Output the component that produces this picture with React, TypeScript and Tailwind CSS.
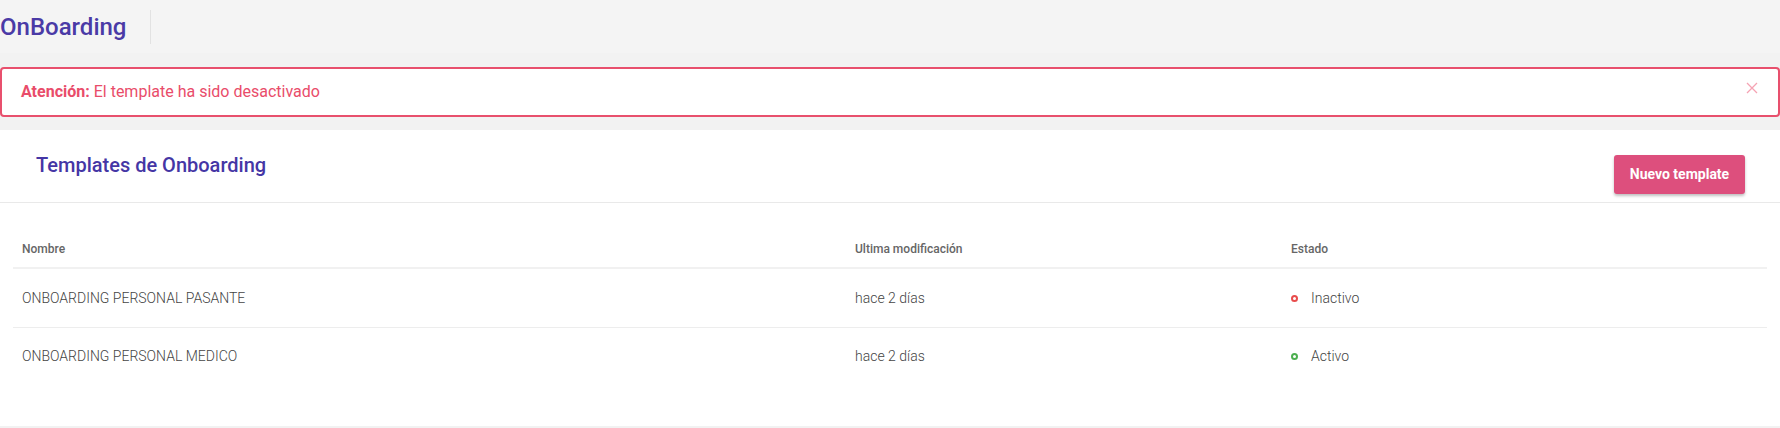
import React from "react";

const rows = [
  { name: "ONBOARDING PERSONAL PASANTE", mod: "hace 2 días", active: false },
  { name: "ONBOARDING PERSONAL MEDICO", mod: "hace 2 días", active: true },
];

export default function App() {
  return (
    <div
      className="w-[1780px] h-[428px] bg-[#f2f2f2] overflow-hidden"
      style={{ fontFamily: "Roboto, 'Noto Sans', sans-serif" }}
    >
      {/* Top bar */}
      <div className="h-[53px] flex items-center bg-[#f4f4f4]">
        <span className="text-[24px] leading-[28px] font-medium text-[#4a3aa6]">OnBoarding</span>
        <div className="ml-[24px] w-px h-[34px] bg-[#e2e2e2]" />
      </div>

      {/* Alert */}
      <div className="mt-[14px] h-[50px] border-2 border-[#e8506d] rounded-[4px] bg-white flex items-center pl-[19px] pr-[20px]">
        <span className="text-[16px] text-[#e94c6a]">
          <span className="font-bold">Atención:</span> El template ha sido desactivado
        </span>
        <div className="ml-auto -mt-[9px]">
          <svg width="12" height="12" viewBox="0 0 12 12" stroke="#f5a3b3" strokeWidth="1.3" fill="none">
            <path d="M1 1L11 11M11 1L1 11" />
          </svg>
        </div>
      </div>

      {/* Card */}
      <div className="mt-[13px] h-[296px] bg-white">
        <div className="h-[73px] border-b border-[#e9e9e9] flex justify-between items-start pl-[36px] pr-[35px]">
          <h1 className="pt-[23px] text-[20px] leading-[24px] font-medium text-[#4536a5]">
            Templates de Onboarding
          </h1>
          <button className="mt-[25px] w-[131px] h-[39px] rounded-[3px] bg-[#dd4f7d] text-white text-[14px] font-bold shadow-[0_2px_3px_rgba(0,0,0,0.25)]">
            Nuevo template
          </button>
        </div>

        <div className="mx-[13px] pt-[27px]">
          <div className="grid grid-cols-[833px_436px_1fr] h-[39px] items-center border-b-2 border-[#f1f1f1] text-[12px] font-medium text-[#666]">
            <div className="pl-[9px]">Nombre</div>
            <div className="pl-[9px]">Ultima modificación</div>
            <div className="pl-[9px]">Estado</div>
          </div>
          {rows.map((r, i) => (
            <div
              key={r.name}
              className={
                i === 0
                  ? "grid grid-cols-[833px_436px_1fr] h-[58px] items-center text-[14px] font-light text-[#444]"
                  : "grid grid-cols-[833px_436px_1fr] h-[58px] items-center text-[14px] font-light text-[#444] border-t border-[#ededed]"
              }
            >
              <div className="pl-[9px]">{r.name}</div>
              <div className="pl-[9px]">{r.mod}</div>
              <div className="pl-[9px] flex items-center">
                <span
                  className={
                    r.active
                      ? "w-[7px] h-[7px] rounded-full border-2 border-[#4caf50]"
                      : "w-[7px] h-[7px] rounded-full border-2 border-[#e84c4c]"
                  }
                />
                <span className="ml-[13px]">{r.active ? "Activo" : "Inactivo"}</span>
              </div>
            </div>
          ))}
        </div>
      </div>
    </div>
  );
}
